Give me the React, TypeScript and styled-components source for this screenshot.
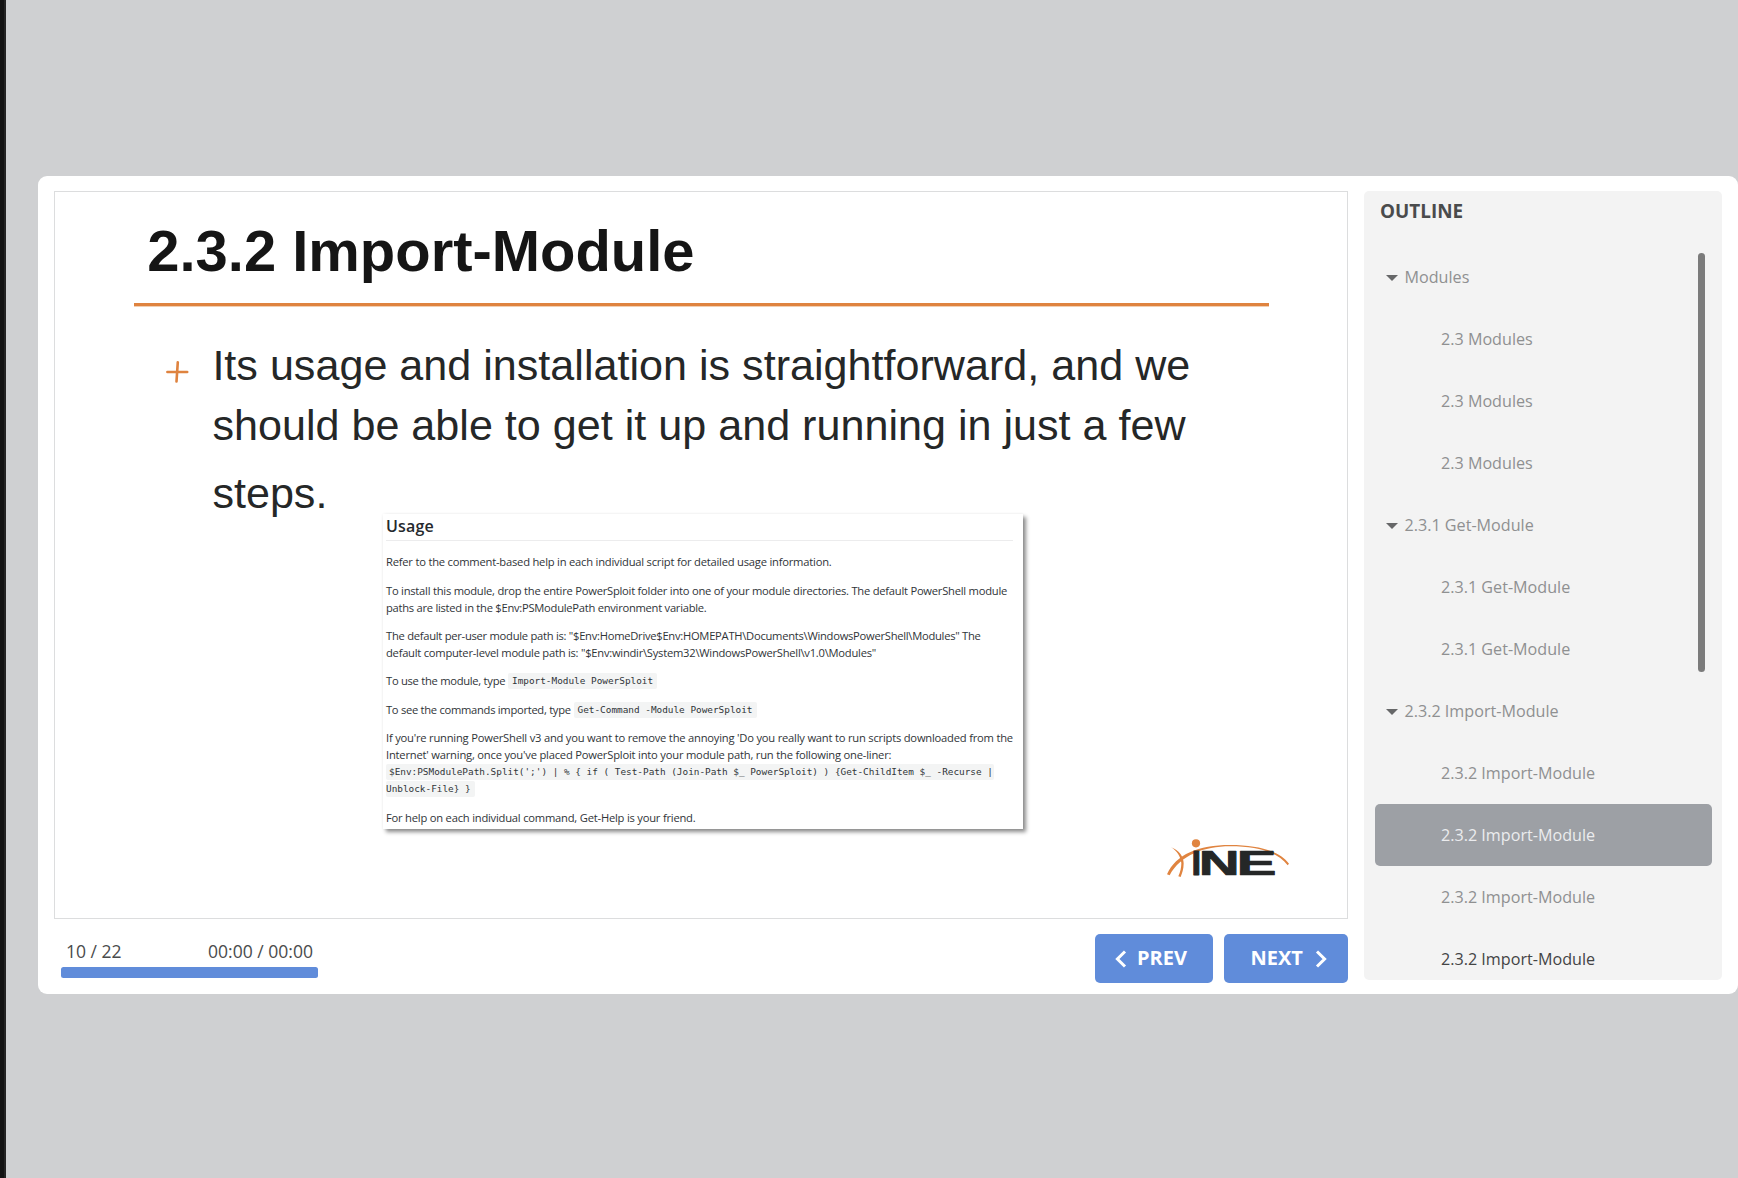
import React from 'react';
import styled, { createGlobalStyle } from 'styled-components';

const GlobalStyle = createGlobalStyle`
  * { box-sizing: border-box; }
  body { margin: 0; background: #cfd0d2; }
`;

const sans = '"Open Sans", "Noto Sans", sans-serif';

const Page = styled.div`
  height: 1178px;
  padding: 176px 0 0 34px;
  background: #cfd0d2;
  border-left: 4px solid #131313;
  box-shadow: inset 2px 0 0 #242424;
  overflow: hidden;
  font-family: ${sans};
`;

const Player = styled.main`
  display: flex;
  gap: 16px;
  height: 818px;
  padding: 15px 16px 14px 16px;
  background: #fff;
  border-radius: 9px;
`;

const Stage = styled.div`
  width: 1294px;
  display: flex;
  flex-direction: column;
`;

const Slide = styled.section`
  flex: none;
  height: 728px;
  border: 1px solid #dcddde;
  display: flex;
  flex-direction: column;
`;

const Title = styled.h1`
  margin: 0 77px 0 79px;
  height: 111px;
  padding: 26px 0 0 13.3px;
  font: bold 57.95px/66px "Liberation Sans", Arial, sans-serif;
  color: #151515;
`;

const Rule = styled.div`
  height: 4px;
  margin: 0 78px 0 79px;
  background: linear-gradient(#df833f 3px, #f2cfb2 3px);
`;

const Bullet = styled.div`
  display: flex;
  margin-left: 111px;
  padding-top: 28px;
  height: 207px;
`;

const PlusMark = styled.svg`
  width: 23px;
  height: 23px;
  margin-top: 25px;
  flex: none;
`;

const BulletText = styled.p`
  margin: 0 0 0 23.4px;
  font: 43.1px/60px "Liberation Sans", Arial, sans-serif;
  color: #252727;
`;

const Line = styled.span<{ $tracking?: number }>`
  display: block;
  white-space: nowrap;
  letter-spacing: ${(p) => p.$tracking ?? 0}px;
`;

const LastLine = styled(Line)`
  padding-top: 15.5px;
  line-height: 44px;
`;

const Panel = styled.article`
  width: 640px;
  height: 315px;
  margin-left: 328px;
  padding: 1px 10px 0 3px;
  background: #fff;
  box-shadow: 3px 3px 4px rgba(0, 0, 0, 0.45), 0 0 3px rgba(0, 0, 0, 0.06);
  color: #303438;
  font-size: 11.2px;
  line-height: 17px;
`;

const PanelTitle = styled.h2`
  margin: 0 0 12.3px;
  height: 26px;
  border-bottom: 1px solid #ececed;
  font-size: 16px;
  font-weight: 600;
  line-height: 23px;
  letter-spacing: 0.2px;
  color: #25292d;
`;

const Para = styled.div`
  margin-bottom: 11.4px;
`;

const Code = styled.code<{ $open?: boolean; $tail?: boolean; $gap?: number }>`
  display: inline-block;
  height: 16px;
  line-height: 16px;
  vertical-align: top;
  margin: 1px 0 0 ${(p) => p.$gap ?? 0}px;
  padding: 0 ${(p) => (p.$open ? 1 : 4)}px 0 ${(p) => (p.$tail ? 0 : p.$open ? 3 : 4)}px;
  background: #f3f4f4;
  border-radius: 2px;
  font-family: "DejaVu Sans Mono", monospace;
  font-size: 9.38px;
  letter-spacing: 0;
`;

const Logo = styled.svg`
  width: 125px;
  height: 42px;
  margin: 8px 57px 0 0;
  align-self: flex-end;
  overflow: visible;
`;

const Controls = styled.div`
  display: flex;
  flex: none;
  justify-content: space-between;
  padding: 15px 0 0 7px;
`;

const Progress = styled.div`
  width: 257px;
`;

const Counters = styled.div`
  display: flex;
  justify-content: space-between;
  height: 33px;
  padding: 5px 5px 0 5px;
  font-size: 17.55px;
  line-height: 24px;
  color: #4a4b4c;
`;

const Track = styled.div`
  height: 11px;
  border-radius: 2.5px;
  background: #608cda;
`;

const Buttons = styled.div`
  display: flex;
  gap: 11px;
`;

const NavButton = styled.button<{ $width: number; $start: number }>`
  display: flex;
  align-items: center;
  gap: 11px;
  width: ${(p) => p.$width}px;
  height: 49px;
  padding: 0 0 2px ${(p) => p.$start}px;
  border: 0;
  border-radius: 5px;
  background: #608cda;
  color: #fff;
  font: bold 20px/28px ${sans};
`;

const Chevron = styled.svg`
  width: 11px;
  height: 18px;
  margin-top: 3px;
  overflow: visible;
`;

const Sidebar = styled.aside`
  position: relative;
  width: 358px;
  height: 789px;
  padding: 0 10.5px 0 11px;
  background: #f3f3f3;
  border-radius: 5px;
  overflow: hidden;
`;

const SidebarTitle = styled.h2`
  margin: 0;
  height: 55px;
  padding: 6px 0 0 5px;
  font-size: 18.9px;
  line-height: 28px;
  font-weight: bold;
  color: #4a4b4c;
`;

const Item = styled.div<{ $kind: string; $tone: string }>`
  display: flex;
  align-items: center;
  height: 62px;
  padding-left: ${(p) => (p.$kind === 'group' ? 11 : 66)}px;
  line-height: 22px;
  border-radius: 5px;
  background: ${(p) => (p.$tone === 'active' ? '#9da0a5' : 'transparent')};
  color: ${(p) => (p.$tone === 'active' ? '#ebecee' : p.$tone === 'unseen' ? '#434445' : '#8f9091')};
  font-size: 16.15px;
`;

const Caret = styled.span`
  margin: 2px 6.5px 0 0;
  border: 0 solid transparent;
  border-width: 6.5px 6.5px 0;
  border-top-color: #666768;
`;

const Scrollbar = styled.div`
  position: absolute;
  top: 62px;
  right: 17px;
  width: 7px;
  height: 419px;
  border-radius: 3.5px;
  background: #7b7b7b;
`;

const outline: [string, string, string][] = [
  ['group', 'Modules', 'seen'],
  ['page', '2.3 Modules', 'seen'],
  ['page', '2.3 Modules', 'seen'],
  ['page', '2.3 Modules', 'seen'],
  ['group', '2.3.1 Get-Module', 'seen'],
  ['page', '2.3.1 Get-Module', 'seen'],
  ['page', '2.3.1 Get-Module', 'seen'],
  ['group', '2.3.2 Import-Module', 'seen'],
  ['page', '2.3.2 Import-Module', 'seen'],
  ['page', '2.3.2 Import-Module', 'active'],
  ['page', '2.3.2 Import-Module', 'seen'],
  ['page', '2.3.2 Import-Module', 'unseen'],
];

const LogoLetter = styled.text`
  fill: #252727;
  stroke: #252727;
  stroke-width: 1px;
  stroke-linejoin: round;
  vector-effect: non-scaling-stroke;
  font: bold 103px "Liberation Sans", Arial, sans-serif;
`;

const Brand = () => (
  <Logo viewBox="255 81 375 126" aria-label="INE">
    <g fill="#e08440">
      <path d="M261 193C288 133 355 105 450 105C540 105 600 125 627 161L623 166C596 130 540 109 450 109C372 109 302 135 269 196Z" />
      <path d="M273 112C297 120 311 140 311 160C311 178 306 190 302 201L295 199C301 186 304 172 304 160C303 140 290 122 273 112Z" />
      <circle cx="348" cy="100" r="12.3" />
    </g>
    <LogoLetter transform="translate(334.5 194.5) scale(1.01 1)">I</LogoLetter>
    <LogoLetter transform="translate(356.4 194.5) scale(1.65 1)">N</LogoLetter>
    <LogoLetter transform="translate(469.4 194.5) scale(1.75 1)">E</LogoLetter>
  </Logo>
);

export default function App() {
  return (
    <>
      <GlobalStyle />
      <Page>
        <Player>
          <Stage>
            <Slide>
              <Title>2.3.2 Import-Module</Title>
              <Rule />
              <Bullet>
                <PlusMark viewBox="0 0 23 23" fill="none" stroke="#df833f" strokeWidth="2.6" strokeLinecap="round">
                  <path d="M1.4 12H21.2M11.8 2.2L10.5 21.5" />
                </PlusMark>
                <BulletText>
                  <Line $tracking={0.01}>Its usage and installation is straightforward, and we</Line>
                  <Line $tracking={0.01}>should be able to get it up and running in just a few</Line>
                  <LastLine>steps.</LastLine>
                </BulletText>
              </Bullet>
              <Panel>
                <PanelTitle>Usage</PanelTitle>
                <Para>
                  <Line $tracking={-0.217}>Refer to the comment-based help in each individual script for detailed usage information.</Line>
                </Para>
                <Para>
                  <Line $tracking={-0.24}>To install this module, drop the entire PowerSploit folder into one of your module directories. The default PowerShell module</Line>
                  <Line $tracking={-0.268}>paths are listed in the $Env:PSModulePath environment variable.</Line>
                </Para>
                <Para>
                  <Line $tracking={-0.268}>{'The default per-user module path is: "$Env:HomeDrive$Env:HOMEPATH\\Documents\\WindowsPowerShell\\Modules" The'}</Line>
                  <Line $tracking={-0.248}>{'default computer-level module path is: "$Env:windir\\System32\\WindowsPowerShell\\v1.0\\Modules"'}</Line>
                </Para>
                <Para>
                  <Line $tracking={-0.28}>
                    To use the module, type<Code $gap={2.8}>Import-Module PowerSploit</Code>
                  </Line>
                </Para>
                <Para>
                  <Line $tracking={-0.29}>
                    To see the commands imported, type<Code $gap={2.8}>Get-Command -Module PowerSploit</Code>
                  </Line>
                </Para>
                <Para>
                  <Line $tracking={-0.214}>If you're running PowerShell v3 and you want to remove the annoying 'Do you really want to run scripts downloaded from the</Line>
                  <Line $tracking={-0.205}>Internet' warning, once you've placed PowerSploit into your module path, run the following one-liner:</Line>
                  <Line>
                    <Code $open>{"$Env:PSModulePath.Split(';') | % { if ( Test-Path (Join-Path $_ PowerSploit) ) {Get-ChildItem $_ -Recurse |"}</Code>
                  </Line>
                  <Line>
                    <Code $tail>{'Unblock-File} }'}</Code>
                  </Line>
                </Para>
                <Para>
                  <Line $tracking={-0.217}>For help on each individual command, Get-Help is your friend.</Line>
                </Para>
              </Panel>
              <Brand />
            </Slide>
            <Controls>
              <Progress>
                <Counters>
                  <span>10 / 22</span>
                  <span>00:00 / 00:00</span>
                </Counters>
                <Track />
              </Progress>
              <Buttons>
                <NavButton $width={118} $start={20}>
                  <Chevron viewBox="0 0 11 18" fill="none" stroke="#fff" strokeWidth="3">
                    <path d="M10 1.5L2.4 9L10 16.5" />
                  </Chevron>
                  PREV
                </NavButton>
                <NavButton $width={124} $start={26.5}>
                  NEXT
                  <Chevron viewBox="0 0 11 18" fill="none" stroke="#fff" strokeWidth="3">
                    <path d="M3 1.5L10.6 9L3 16.5" />
                  </Chevron>
                </NavButton>
              </Buttons>
            </Controls>
          </Stage>
          <Sidebar>
            <SidebarTitle>OUTLINE</SidebarTitle>
            {outline.map(([kind, label, tone], i) => (
              <Item key={i} $kind={kind} $tone={tone}>
                {kind === 'group' && <Caret />}
                {label}
              </Item>
            ))}
            <Scrollbar />
          </Sidebar>
        </Player>
      </Page>
    </>
  );
}
